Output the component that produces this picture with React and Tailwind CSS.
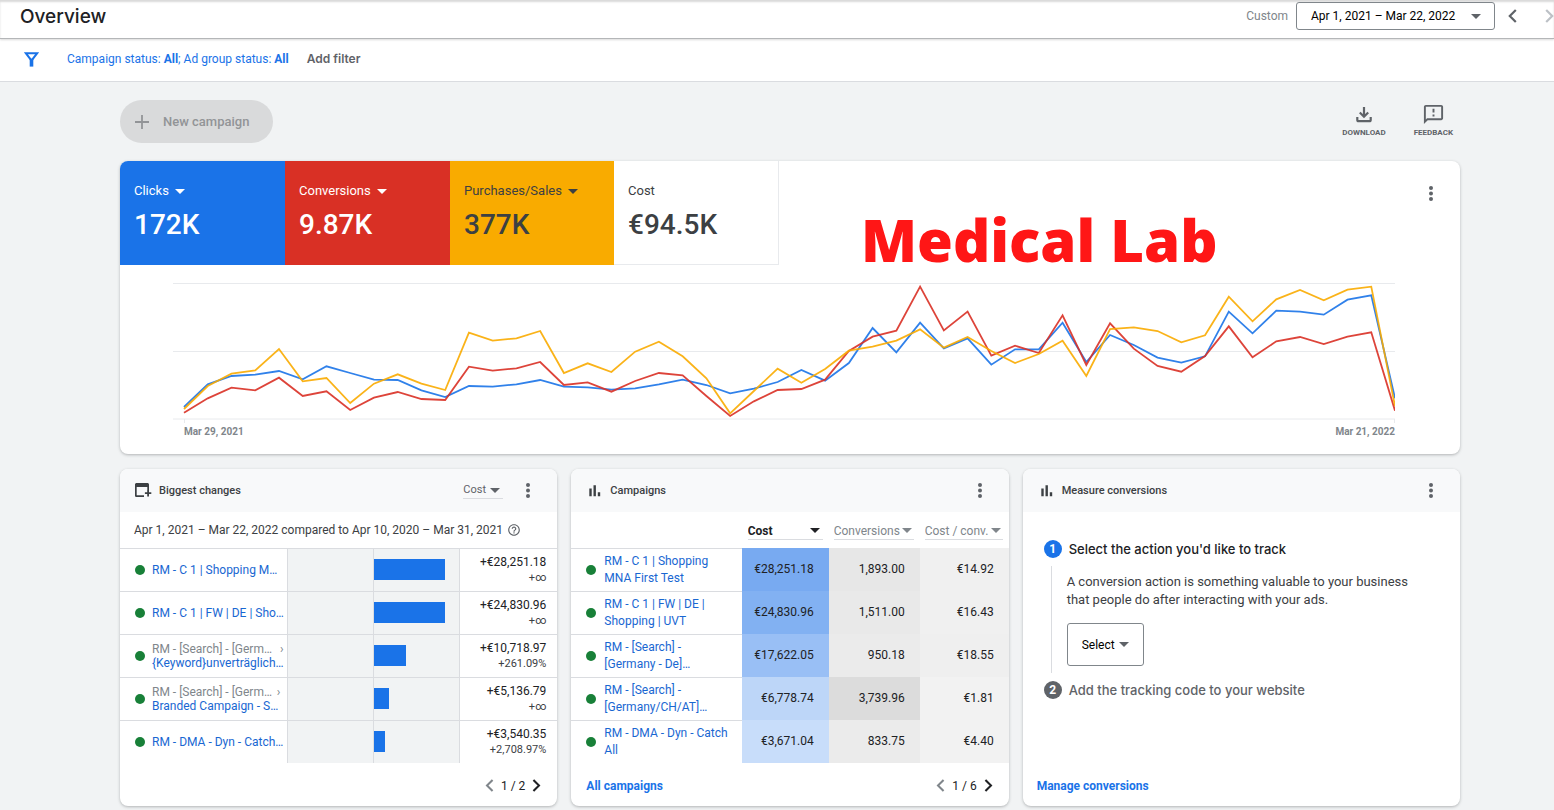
import React from 'react';
import { MdOutlineFeedback, MdHelpOutline } from 'react-icons/md';

const metrics = [
  { label: 'Clicks', value: '172K', tile: 'w-[165px] bg-[#1a73e8] text-white rounded-tl-lg', menu: true },
  { label: 'Conversions', value: '9.87K', tile: 'w-[165px] bg-[#d93025] text-white', menu: true },
  { label: 'Purchases/Sales', value: '377K', tile: 'w-[164px] bg-[#f9ab00] text-[#3c4043]', menu: true },
  { label: 'Cost', value: '€94.5K', tile: 'w-[165px] bg-white text-[#3c4043] border-r border-b border-[#e8eaed]', menu: false },
];

// Weekly points, measured down from the top of the plot
const series = [
  {
    name: 'Clicks',
    color: '#1a73e8',
    points: [411, 343, 318, 314, 303, 328, 289, 309, 329, 330, 361, 381, 348, 350, 343, 330, 350, 352, 359, 355, 343, 329, 345, 370, 356, 336, 300, 332, 279, 174, 247, 158, 235, 205, 284, 238, 238, 158, 276, 195, 225, 263, 278, 259, 125, 190, 122, 125, 134, 89, 76, 385],
  },
  {
    name: 'Conversions',
    color: '#d93025',
    points: [428, 385, 353, 361, 323, 378, 364, 420, 383, 366, 387, 390, 290, 302, 295, 276, 345, 337, 365, 333, 309, 316, 378, 438, 394, 360, 357, 329, 243, 200, 182, 50, 181, 125, 257, 227, 249, 136, 285, 160, 236, 288, 305, 258, 169, 262, 214, 201, 222, 200, 187, 422],
  },
  {
    name: 'Purchases/Sales',
    color: '#f9ab00',
    points: [417, 348, 311, 301, 237, 334, 324, 399, 341, 313, 341, 360, 188, 212, 205, 183, 309, 280, 306, 245, 215, 259, 325, 430, 363, 296, 338, 297, 242, 230, 212, 178, 233, 201, 243, 279, 252, 212, 318, 177, 172, 183, 217, 196, 80, 154, 88, 60, 91, 59, 50, 408],
  },
];

const changes = [
  { name: 'RM - C 1 | Shopping M…', bar: 71, amount: '+€28,251.18', percent: '+∞' },
  { name: 'RM - C 1 | FW | DE | Sho…', bar: 71, amount: '+€24,830.96', percent: '+∞' },
  { parent: 'RM - [Search] - [Germ…', name: '{Keyword}unverträglich…', bar: 32, amount: '+€10,718.97', percent: '+261.09%' },
  { parent: 'RM - [Search] - [Germ…', name: 'Branded Campaign - S…', bar: 15, amount: '+€5,136.79', percent: '+∞' },
  { name: 'RM - DMA - Dyn - Catch…', bar: 11, amount: '+€3,540.35', percent: '+2,708.97%' },
];

const campaigns = [
  { name: ['RM - C 1 | Shopping', 'MNA First Test'], cost: '€28,251.18', conv: '1,893.00', cpc: '€14.92', shades: ['bg-[#78aaf1]', 'bg-[#e7e7e7]', 'bg-[#f0f0f0]'] },
  { name: ['RM - C 1 | FW | DE |', 'Shopping | UVT'], cost: '€24,830.96', conv: '1,511.00', cpc: '€16.43', shades: ['bg-[#82b1f2]', 'bg-[#e9e9e9]', 'bg-[#f0f0f0]'] },
  { name: ['RM - [Search] -', '[Germany - De]…'], cost: '€17,622.05', conv: '950.18', cpc: '€18.55', shades: ['bg-[#99bff5]', 'bg-[#ebebeb]', 'bg-[#efefef]'] },
  { name: ['RM - [Search] -', '[Germany/CH/AT]…'], cost: '€6,778.74', conv: '3,739.96', cpc: '€1.81', shades: ['bg-[#bdd6f8]', 'bg-[#dcdcdc]', 'bg-[#f2f2f2]'] },
  { name: ['RM - DMA - Dyn - Catch', 'All'], cost: '€3,671.04', conv: '833.75', cpc: '€4.40', shades: ['bg-[#c8ddfa]', 'bg-[#ebebeb]', 'bg-[#f2f2f2]'] },
];

const Caret = ({ className = '' }) => (
  <svg viewBox="0 0 10 5" className={`w-[10px] h-[5px] shrink-0 ${className}`} fill="currentColor" aria-hidden="true">
    <path d="M0 0h10L5 5z" />
  </svg>
);

const Chevron = ({ right, className = '' }) => (
  <svg viewBox="0 0 9 14" className={`shrink-0 ${className}`} fill="none" stroke="currentColor" strokeWidth="2.2" aria-hidden="true">
    <path d={right ? 'M1.2 1l6 6-6 6' : 'M7.8 1l-6 6 6 6'} />
  </svg>
);

const DotsButton = ({ label }) => (
  <button type="button" aria-label={label} className="w-6 h-6 flex items-center justify-center text-[#5f6368]">
    <svg viewBox="0 0 4 15" className="w-1 h-[15px]" fill="currentColor">
      <circle cx="2" cy="2" r="2" />
      <circle cx="2" cy="7.5" r="2" />
      <circle cx="2" cy="13" r="2" />
    </svg>
  </button>
);

const BarsIcon = () => (
  <svg viewBox="0 0 12 12" className="w-3 h-3 text-[#3c4043]" fill="currentColor" aria-hidden="true">
    <path d="M0.3 3.6h2.4v7.6H0.3zM4.5 0.2h2.4v11H4.5zM8.8 7.2h2.4v4H8.8z" />
  </svg>
);

const WindowPlusIcon = () => (
  <svg viewBox="0 0 18 15" className="w-[18px] h-[15px] text-[#3c4043]" fill="currentColor" aria-hidden="true">
    <path d="M2.6 0h10.8c.9 0 1.6.7 1.6 1.6V7h-1.7V4H2.7v8.3H10V14H2.6C1.7 14 1 13.3 1 12.4V1.6C1 .7 1.7 0 2.6 0z" />
    <path d="M13.2 7h1.8v2.3h2.3v1.8H15v2.3h-1.8v-2.3h-2.3V9.3h2.3z" />
  </svg>
);

const StatusDot = () => <span className="w-[10px] h-[10px] rounded-full bg-[#188038] shrink-0" />;

// Native select with its caret laid in the same grid cell
const Dropdown = ({ label, value, className = '', selectClass = '', caretClass = '' }) => (
  <div className={`grid items-center ${className}`}>
    <select aria-label={label} className={`col-start-1 row-start-1 appearance-none bg-transparent ${selectClass}`}>
      <option>{value}</option>
    </select>
    <Caret className={`col-start-1 row-start-1 justify-self-end pointer-events-none ${caretClass}`} />
  </div>
);

const Pager = ({ text }) => (
  <div className="flex items-center gap-[7px] text-xs text-[#202124]">
    <button type="button" aria-label="Previous page" className="text-[#80868b]">
      <Chevron className="w-[9px] h-[13px]" />
    </button>
    <span>{text}</span>
    <button type="button" aria-label="Next page" className="text-[#202124]">
      <Chevron right className="w-[9px] h-[13px]" />
    </button>
  </div>
);

const Card = ({ icon, title, action, children }) => (
  <section className="bg-white rounded-lg shadow-[0_1px_3px_rgba(60,64,67,0.35)] flex flex-col overflow-hidden">
    <header className="h-[43px] bg-[#f8f9fa] flex items-center pl-[14px] pr-[17px]">
      <span className="w-[25px] flex">{icon}</span>
      <h2 className="text-[11px] leading-4 font-medium text-[#3c4043] flex-1">{title}</h2>
      {action}
      <DotsButton label={`${title} options`} />
    </header>
    {children}
  </section>
);

const Chart = () => {
  const toLine = (points) => points.map((p, i) => `${11 + (i * 1211) / (points.length - 1)},${p / 3}`).join(' ');
  return (
    <div className="pt-[5px] pl-[53px] pr-[65px] pb-4">
      <svg viewBox="0 0 1222 155" preserveAspectRatio="none" className="block w-full h-[155px]" role="img" aria-label="Weekly performance">
        <path d="M0 13.5H1222M0 81.5H1222M0 149H1222M11.5 149v4M1221.5 149v4" stroke="#e8eaed" fill="none" />
        {series.map((s) => (
          <polyline key={s.name} points={toLine(s.points)} fill="none" stroke={s.color} strokeOpacity="0.9" strokeWidth="1.8" vectorEffect="non-scaling-stroke" />
        ))}
      </svg>
      <div className="flex justify-between pt-px pl-[11px] text-[10px] leading-3 font-bold text-[#80868b]">
        <span>Mar 29, 2021</span>
        <span>Mar 21, 2022</span>
      </div>
    </div>
  );
};

const BiggestChanges = () => (
  <Card
    icon={<WindowPlusIcon />}
    title="Biggest changes"
    action={
      <Dropdown
        label="Change metric"
        value="Cost"
        className="w-10 mr-[13px] border-b border-[#dadce0] text-[#5f6368]"
        selectClass="text-[11px] leading-4"
        caretClass="mr-[3px]"
      />
    }
  >
    <div className="h-9 px-[14px] flex items-center gap-1 text-xs text-[#3c4043]">
      <span>Apr 1, 2021 – Mar 22, 2022 compared to Apr 10, 2020 – Mar 31, 2021</span>
      <MdHelpOutline className="w-[14px] h-[14px] text-[#5f6368]" />
    </div>
    <table className="w-full table-fixed border-separate border-spacing-0 text-xs">
      <colgroup>
        <col />
        <col className="w-[86px]" />
        <col className="w-[86px]" />
        <col className="w-[98px]" />
      </colgroup>
      <tbody>
        {changes.map((row) => (
          <tr key={row.name} className="h-[43px]">
            <td className="border-t border-[#dadce0] p-0 pl-[15px]">
              <div className="flex items-center gap-[7px]">
                <StatusDot />
                <div className="leading-[14px] whitespace-nowrap flex-1 pr-[7px]">
                  {row.parent && (
                    <div className="flex justify-between text-[#80868b]">
                      <span>{row.parent}</span>
                      <span>›</span>
                    </div>
                  )}
                  <a href="#" className="text-[#1967d2]">{row.name}</a>
                </div>
              </div>
            </td>
            <td className="border-t border-l border-[#dadce0] bg-[#f1f3f4] p-0" />
            <td className="border-t border-l border-[#dadce0] bg-[#f1f3f4] p-0 pb-[2px]">
              <div className="h-[21px] bg-[#1a73e8]" style={{ width: row.bar }} />
            </td>
            <td className="border-t border-l border-[#dadce0] p-0 pr-[11px] text-right leading-4 text-[#202124]">
              <div>{row.amount}</div>
              <div className="text-[11px] text-[#3c4043]">{row.percent}</div>
            </td>
          </tr>
        ))}
      </tbody>
    </table>
    <footer className="h-[43px] flex items-center justify-end pr-4 pt-[2px]">
      <Pager text="1 / 2" />
    </footer>
  </Card>
);

const Campaigns = () => (
  <Card icon={<span className="pl-1"><BarsIcon /></span>} title="Campaigns">
    <table className="w-full table-fixed border-separate border-spacing-0 text-xs">
      <colgroup>
        <col />
        <col className="w-[87px]" />
        <col className="w-[91px]" />
        <col className="w-[89px]" />
      </colgroup>
      <thead>
        <tr className="h-9">
          <th className="p-0" aria-label="Campaign" />
          <th className="p-0 px-[6px] pt-[2px]">
            <Dropdown label="First column" value="Cost" className="border-b border-[#dadce0] text-[#202124]" selectClass="text-xs leading-4 font-bold" caretClass="mr-[3px]" />
          </th>
          <th className="p-0 pl-[5px] pr-[6px] pt-[2px]">
            <Dropdown label="Second column" value="Conversions" className="border-b border-[#dadce0] text-[#80868b]" selectClass="text-xs leading-4 font-normal" caretClass="mr-[2px]" />
          </th>
          <th className="p-0 pl-[5px] pr-[6px] pt-[2px]">
            <Dropdown label="Third column" value="Cost / conv." className="border-b border-[#dadce0] text-[#80868b]" selectClass="text-xs leading-4 font-normal" caretClass="mr-[2px]" />
          </th>
        </tr>
      </thead>
      <tbody>
        {campaigns.map((row) => (
          <tr key={row.cost} className="h-[43px] text-[#202124] text-right">
            <td className="border-t border-[#dadce0] p-0 pl-[15px] text-left">
              <div className="flex items-center gap-2">
                <StatusDot />
                <a href="#" className="leading-[17px] text-[#1967d2] whitespace-nowrap">
                  {row.name[0]}<br />{row.name[1]}
                </a>
              </div>
            </td>
            <td className={`p-0 pr-[15px] pb-[2px] ${row.shades[0]}`}>{row.cost}</td>
            <td className={`p-0 pr-[15px] pb-[2px] ${row.shades[1]}`}>{row.conv}</td>
            <td className={`p-0 pr-[15px] pb-[2px] ${row.shades[2]}`}>{row.cpc}</td>
          </tr>
        ))}
      </tbody>
    </table>
    <footer className="h-[43px] flex items-center justify-between pl-[15px] pr-4 pt-[2px]">
      <a href="#" className="text-xs font-bold text-[#1a73e8]">All campaigns</a>
      <Pager text="1 / 6" />
    </footer>
  </Card>
);

const MeasureConversions = () => (
  <Card icon={<span className="pl-1"><BarsIcon /></span>} title="Measure conversions">
    <div className="flex-1 pt-7 px-[21px]">
      <div className="flex items-center gap-[7px]">
        <span className="w-[18px] h-[18px] rounded-full bg-[#1a73e8] text-white text-xs font-bold flex items-center justify-center">1</span>
        <h3 className="font-[Inter,sans-serif] text-[13px] leading-[18px] font-medium text-[#202124]">Select the action you'd like to track</h3>
      </div>
      <div className="my-2 ml-[7px] pt-[7px] pl-[15px] border-l border-[#dadce0]">
        <p className="text-[13px] leading-[18px] text-[#3c4043]">
          A conversion action is something valuable to your business<br />that people do after interacting with your ads.
        </p>
        <div className="pt-[14px] pb-[7px]">
          <Dropdown
            label="Conversion action"
            value="Select"
            className="w-[77px] h-[43px] rounded-[3px] border border-[#80868b] text-[#5f6368]"
            selectClass="h-full pl-[14px] text-xs text-black"
            caretClass="mr-[14px]"
          />
        </div>
      </div>
      <div className="flex items-center gap-[7px]">
        <span className="w-[18px] h-[18px] rounded-full bg-[#5f6368] text-white text-xs font-bold flex items-center justify-center">2</span>
        <h3 className="font-[Inter,sans-serif] text-[13px] leading-[18px] font-medium text-[#5f6368]">Add the tracking code to your website</h3>
      </div>
    </div>
    <footer className="h-[43px] flex items-center px-[14px] pt-[2px]">
      <a href="#" className="text-xs font-bold text-[#1a73e8]">Manage conversions</a>
    </footer>
  </Card>
);

const App = () => (
  <div className="min-h-screen bg-[#f1f3f4] font-[Roboto,'Liberation_Sans',sans-serif] text-[#3c4043] overflow-x-hidden">
    <header className="h-[39px] bg-white border-b border-[#b4b6b8] shadow-[inset_0_2px_2px_rgba(0,0,0,0.15),0_1px_2px_rgba(0,0,0,0.15)] relative flex items-center justify-between pl-5 pb-[6px]">
      <h1 className="pt-[2px] font-[Inter,sans-serif] text-[19px] leading-6 font-medium text-[#202124]">Overview</h1>
      <div className="flex items-center">
        <span className="text-xs text-[#80868b] mr-2">Custom</span>
        <button type="button" className="w-[199px] h-7 flex items-center justify-between pl-[14px] pr-[13px] border border-[#80868b] rounded-[3px] text-xs text-black">
          Apr 1, 2021 – Mar 22, 2022
          <Caret className="text-[#5f6368]" />
        </button>
        <button type="button" aria-label="Previous period" className="ml-[13px] text-[#5f6368]"><Chevron className="w-[9px] h-[14px]" /></button>
        <button type="button" aria-label="Next period" className="ml-7 text-[#bdc1c6]"><Chevron right className="w-[9px] h-[14px]" /></button>
      </div>
    </header>

    <div className="h-[43px] bg-white border-b border-[#dadce0] flex items-center pl-6 pb-[2px]">
      <svg viewBox="0 0 15 15" className="w-[15px] h-[15px]" fill="none" stroke="#1a73e8" strokeWidth="2" aria-hidden="true">
        <path d="M1.8 1.2h11.4L8.4 7.4H6.6z" />
        <path d="M7.5 7v7.6" strokeWidth="3.6" />
      </svg>
      <button type="button" className="ml-7 text-xs text-[#1a73e8]">
        Campaign status: <b>All</b>; Ad group status: <b>All</b>
      </button>
      <button type="button" className="ml-[18px] font-[Inter,sans-serif] text-xs font-semibold text-[#5f6368]">Add filter</button>
    </div>

    <main className="pl-[120px] pr-[94px] pt-[18px] pb-1">
      <div className="flex items-center justify-between pr-[7px]">
        <button type="button" className="h-[43px] pl-[14px] pr-6 rounded-full bg-[#d9dadb] text-[#929497] flex items-center gap-[13px] text-[13px] font-medium">
          <svg viewBox="0 0 16 16" className="w-4 h-4" fill="none" stroke="currentColor" strokeWidth="1.8" aria-hidden="true">
            <path d="M8 1v14M1 8h14" />
          </svg>
          New campaign
        </button>
        <div className="flex gap-7 pb-[2px] text-[8px] leading-[10px] font-bold text-[#5f6368]">
          <button type="button" className="flex flex-col items-center gap-[2px]">
            <svg viewBox="0 -1.5 20 23" className="w-5 h-[23px]" fill="none" stroke="currentColor" strokeWidth="2.2" aria-hidden="true">
              <path d="M10 2.5v9M5.8 8l4.2 4.2L14.2 8M3.3 12.5v2.7c0 .8.5 1.5 1.3 1.5h10.8c.8 0 1.3-.7 1.3-1.5v-2.7" />
            </svg>
            DOWNLOAD
          </button>
          <button type="button" className="flex flex-col items-center gap-[2px]">
            <MdOutlineFeedback className="w-[23px] h-[23px]" />
            FEEDBACK
          </button>
        </div>
      </div>

      <section className="mt-[18px] bg-white rounded-lg shadow-[0_1px_3px_rgba(60,64,67,0.35)]">
        <div className="flex">
          {metrics.map((m) => (
            <div key={m.label} className={`h-[104px] pt-5 pl-[14px] ${m.tile}`}>
              {m.menu ? (
                <Dropdown label={`${m.label} metric`} value={m.label} className="w-fit" selectClass="pr-4 text-[13px] leading-5" />
              ) : (
                <div className="text-[13px] leading-5">{m.label}</div>
              )}
              <div className="mt-2 text-[28px] leading-8 font-medium">{m.value}</div>
            </div>
          ))}
          <div className="flex-1 flex justify-between pl-[82px] pr-[17px] pt-5">
            <div className="pt-[34px] font-['Open_Sans',sans-serif] text-[58px] leading-[50px] font-extrabold text-[#ff1616] whitespace-nowrap">Medical Lab</div>
            <DotsButton label="Chart options" />
          </div>
        </div>
        <Chart />
      </section>

      <div className="mt-[15px] grid grid-cols-3 gap-[14px]">
        <BiggestChanges />
        <Campaigns />
        <MeasureConversions />
      </div>
    </main>
  </div>
);

export default App;
